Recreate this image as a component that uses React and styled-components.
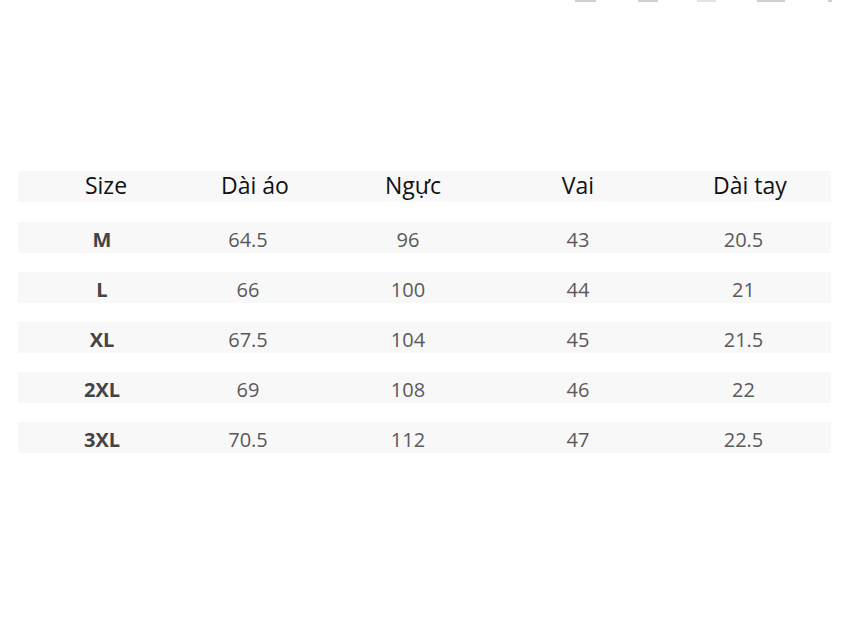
import React from 'react';
import styled, { createGlobalStyle } from 'styled-components';

const GlobalStyle = createGlobalStyle`
  html, body {
    margin: 0;
    padding: 0;
    background: #fff;
  }
  body {
    font-family: "Open Sans", "Noto Sans", sans-serif;
  }
`;

const header = [
  { label: 'Size', shift: 8 },
  { label: 'Dài áo', shift: 14 },
  { label: 'Ngực', shift: 10 },
  { label: 'Vai', shift: 0 },
  { label: 'Dài tay', shift: 13 },
];

const rows = [
  ['M', '64.5', '96', '43', '20.5'],
  ['L', '66', '100', '44', '21'],
  ['XL', '67.5', '104', '45', '21.5'],
  ['2XL', '69', '108', '46', '22'],
  ['3XL', '70.5', '112', '47', '22.5'],
];

// faint bottoms of toolbar icons cut off at the top edge
const marks = [
  { w: 21, gap: 575 },
  { w: 20, gap: 42 },
  { w: 19, gap: 39 },
  { w: 28, gap: 41 },
  { w: 4, gap: 43 },
];

export default function App() {
  return (
    <Page>
      <GlobalStyle />
      <TopStrip>
        {marks.map((m, i) => (
          <Mark key={i} $w={m.w} $gap={m.gap} $light={i === 2} />
        ))}
      </TopStrip>
      <Table>
        <Band $head>
          {header.map((h) => (
            <HeadCell key={h.label} $shift={h.shift}>{h.label}</HeadCell>
          ))}
        </Band>
        {rows.map((r) => (
          <Band key={r[0]}>
            {r.map((v, i) => (
              <Cell key={i} $bold={i === 0}>{v}</Cell>
            ))}
          </Band>
        ))}
      </Table>
    </Page>
  );
}

const Page = styled.div`
  width: 848px;
  height: 640px;
  overflow: hidden;
`;

const TopStrip = styled.div`
  display: flex;
  height: 3px;
`;

const Mark = styled.span`
  display: block;
  width: ${(p) => p.$w}px;
  height: 2px;
  margin-left: ${(p) => p.$gap}px;
  background: ${(p) => (p.$light ? '#e2e2e2' : '#cfcfcf')};
`;

const Table = styled.div`
  display: flex;
  flex-direction: column;
  gap: 19px;
  width: 813px;
  margin: 168px 0 0 18px;
`;

const Band = styled.div`
  display: grid;
  grid-template-columns: 168px 124px 196px 144px 187px;
  align-items: center;
  height: 31px;
  background: #f8f8f8;
  margin-bottom: ${(p) => (p.$head ? '1px' : '0')};
`;

const HeadCell = styled.div`
  text-align: center;
  padding-left: ${(p) => p.$shift}px;
  font-size: 23px;
  color: #111;
  line-height: 31px;
  margin-top: -2px;
`;

const Cell = styled.div`
  text-align: center;
  font-size: 20px;
  line-height: 31px;
  margin-top: 2px;
  color: ${(p) => (p.$bold ? '#444' : '#5a5a5a')};
  font-weight: ${(p) => (p.$bold ? 700 : 400)};
`;
